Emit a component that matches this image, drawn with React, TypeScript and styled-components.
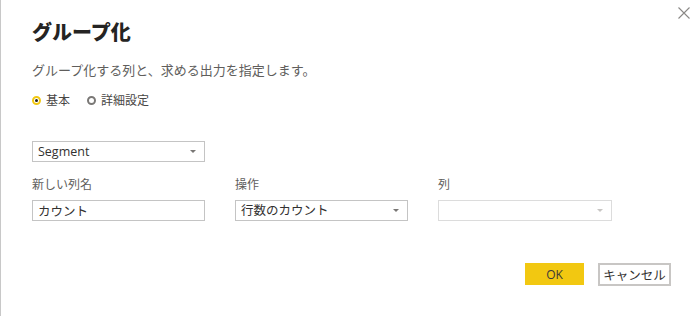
import styled, { createGlobalStyle } from "styled-components";

const GlobalStyle = createGlobalStyle`
  html, body {
    margin: 0;
    padding: 0;
    background: #ffffff;
  }
  body {
    font-family: "Segoe UI", "Noto Sans", "Noto Sans CJK JP", sans-serif;
    color: #252423;
  }
`;

function Arrow({ disabled }: { disabled?: boolean }) {
  return (
    <ArrowSvg width="6" height="3" viewBox="0 0 6 3">
      <path d="M0 0 H6 L3 3 Z" fill={disabled ? "#c8c6c4" : "#797775"} />
    </ArrowSvg>
  );
}

function App() {
  return (
    <>
      <GlobalStyle />
      <Dialog>
        <CloseButton aria-label="閉じる">
          <svg width="12" height="12" viewBox="0 0 12 12">
            <path
              d="M0.5 0.5 L11.5 11.5 M11.5 0.5 L0.5 11.5"
              stroke="#8a8886"
              strokeWidth="1.1"
              fill="none"
            />
          </svg>
        </CloseButton>

        <Title>グループ化</Title>
        <Subtitle>グループ化する列と、求める出力を指定します。</Subtitle>

        <RadioRow>
          <RadioItem>
            <RadioDot $checked />
            基本
          </RadioItem>
          <RadioItem>
            <RadioDot />
            詳細設定
          </RadioItem>
        </RadioRow>

        <Select $width={173}>
          <span>Segment</span>
          <Arrow />
        </Select>

        <FieldGrid>
          <FieldLabel>新しい列名</FieldLabel>
          <FieldLabel>操作</FieldLabel>
          <FieldLabel>列</FieldLabel>
          <TextBox>カウント</TextBox>
          <Select>
            <span>行数のカウント</span>
            <Arrow />
          </Select>
          <Select $disabled>
            <span />
            <Arrow disabled />
          </Select>
        </FieldGrid>

        <Footer>
          <PrimaryButton>OK</PrimaryButton>
          <SecondaryButton>キャンセル</SecondaryButton>
        </Footer>
      </Dialog>
    </>
  );
}

export default App;

const Dialog = styled.div`
  position: relative;
  box-sizing: border-box;
  width: 699px;
  height: 316px;
  border-left: 1px solid #c8c8c8;
  padding: 0 28px 0 31px;
  display: flex;
  flex-direction: column;
  overflow: hidden;
`;

const CloseButton = styled.button`
  position: absolute;
  top: 7px;
  right: 9px;
  width: 12px;
  height: 12px;
  padding: 0;
  border: none;
  background: transparent;
  display: flex;
`;

const Title = styled.h1`
  margin: 18px 0 0;
  font-family: "Noto Sans CJK JP", sans-serif;
  font-size: 20px;
  line-height: 28px;
  font-weight: 900;
  color: #252423;
`;

const Subtitle = styled.p`
  margin: 15px 0 0;
  font-family: "Noto Sans CJK JP", sans-serif;
  font-size: 13px;
  line-height: 18px;
  color: #605e5c;
`;

const RadioRow = styled.div`
  margin-top: 12px;
  display: flex;
  align-items: center;
  gap: 17px;
  height: 18px;
`;

const RadioItem = styled.label`
  display: flex;
  align-items: center;
  gap: 5px;
  font-family: "Noto Sans CJK JP", sans-serif;
  font-size: 12px;
  line-height: 18px;
  color: #484644;
`;

const RadioDot = styled.span<{ $checked?: boolean }>`
  box-sizing: border-box;
  width: 9px;
  height: 9px;
  border-radius: 50%;
  border: 2px solid ${(p) => (p.$checked ? "#f2c811" : "#7a7876")};
  background: #ffffff;
  display: flex;
  align-items: center;
  justify-content: center;
  &::after {
    content: "";
    width: 3px;
    height: 3px;
    border-radius: 50%;
    background: ${(p) => (p.$checked ? "#252423" : "transparent")};
  }
`;

const Select = styled.div<{ $width?: number; $disabled?: boolean }>`
  box-sizing: border-box;
  width: ${(p) => (p.$width ? `${p.$width}px` : "100%")};
  height: 21px;
  margin-top: ${(p) => (p.$width ? "32px" : "0")};
  border: 1px solid ${(p) => (p.$disabled ? "#dcdcdc" : "#c4c4c4")};
  background: #ffffff;
  display: flex;
  align-items: center;
  justify-content: space-between;
  padding: 0 8px 0 5px;
  font-size: 12.5px;
  color: #323130;
  span {
    font-family: "Segoe UI", "Open Sans", "Noto Sans CJK JP", sans-serif;
    line-height: 19px;
  }
`;

const ArrowSvg = styled.svg`
  flex: none;
`;

const FieldGrid = styled.div`
  margin-top: 13px;
  display: grid;
  grid-template-columns: 173px 173px 174px;
  column-gap: 30px;
  row-gap: 7px;
`;

const FieldLabel = styled.div`
  font-family: "Noto Sans CJK JP", sans-serif;
  font-size: 12px;
  line-height: 18px;
  color: #605e5c;
`;

const TextBox = styled.div`
  box-sizing: border-box;
  height: 21px;
  border: 1px solid #c4c4c4;
  padding: 0 5px;
  display: flex;
  align-items: center;
  font-family: "Noto Sans CJK JP", sans-serif;
  font-size: 12.5px;
  color: #323130;
`;

const Footer = styled.div`
  margin-top: 42px;
  display: flex;
  justify-content: flex-end;
  align-items: flex-start;
  gap: 14px;
`;

const PrimaryButton = styled.button`
  box-sizing: border-box;
  width: 59px;
  height: 22px;
  border: none;
  background: #f2c811;
  color: #3b3a39;
  font-family: "Segoe UI", "Open Sans", sans-serif;
  font-size: 12px;
  padding: 0;
`;

const SecondaryButton = styled.button`
  box-sizing: border-box;
  width: 73px;
  height: 23px;
  border: 2px solid #c8c6c4;
  background: #ffffff;
  color: #323130;
  font-family: "Noto Sans CJK JP", sans-serif;
  font-size: 12.5px;
  padding: 0;
`;
